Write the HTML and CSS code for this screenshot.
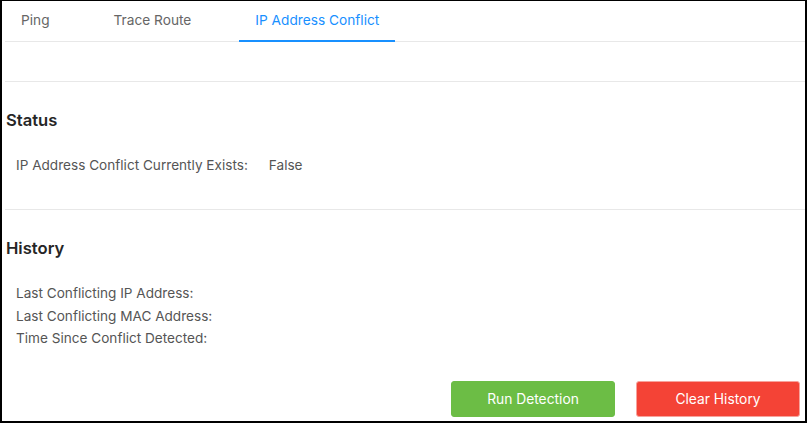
FILE: index.html
```html
<!DOCTYPE html>
<html>
<head>
<meta charset="utf-8">
<link rel="stylesheet" href="styles.css">
</head>
<body>
<div class="frame">
  <div class="tabs">
    <div class="tab">Ping</div>
    <div class="tab">Trace Route</div>
    <div class="tab active">IP Address Conflict</div>
  </div>
  <div class="spacer"></div>
  <section class="section status">
    <h2 class="heading">Status</h2>
    <div class="rows">
      <div class="row"><span class="label">IP Address Conflict Currently Exists:</span><span class="value">False</span></div>
    </div>
  </section>
  <section class="section history">
    <h2 class="heading">History</h2>
    <div class="rows">
      <div class="row"><span class="label">Last Conflicting IP Address:</span></div>
      <div class="row"><span class="label">Last Conflicting MAC Address:</span></div>
      <div class="row"><span class="label">Time Since Conflict Detected:</span></div>
    </div>
  </section>
  <div class="actions">
    <button class="btn btn-run">Run Detection</button>
    <button class="btn btn-clear">Clear History</button>
  </div>
</div>
</body>
</html>
```

FILE: styles.css
```css
* { box-sizing: border-box; }
html, body { margin: 0; padding: 0; background: #fff; }
body {
  font-family: Inter, "Noto Sans", "Liberation Sans", sans-serif;
  width: 807px;
  height: 423px;
}
.frame {
  width: 807px;
  height: 423px;
  border-style: solid;
  border-color: #000;
  border-width: 1px 2px 2px 2px;
  padding-left: 3px;
}
.tabs {
  display: flex;
  gap: 32px;
  height: 41px;
  border-bottom: 1px solid #e8e8e8;
}
.tab {
  height: 41px;
  padding: 0 16px;
  line-height: 39px;
  font-size: 13.7px;
  color: #666;
  border-bottom: 2px solid transparent;
}
.tab.active {
  color: #1890ff;
  border-bottom-color: #1890ff;
}
.spacer {
  height: 40px;
  border-bottom: 1px solid #e8e8e8;
}
.section {
  padding-top: 26px;
}
.status {
  height: 128px;
  border-bottom: 1px solid #e8e8e8;
}
.heading {
  margin: 0 0 0 1px;
  font-size: 16.6px;
  line-height: 24px;
  font-weight: 600;
  color: #262626;
}
.rows {
  margin-top: 22px;
  padding-left: 11px;
}
.row {
  display: flex;
  font-size: 13.6px;
  line-height: 22.5px;
  color: #555;
}
.value {
  margin-left: 21px;
}
.actions {
  display: flex;
  justify-content: flex-end;
  gap: 21px;
  padding-right: 5px;
  margin-top: 31px;
}
.btn {
  width: 164px;
  height: 36px;
  border-radius: 3px;
  border: 1px solid transparent;
  color: #fff;
  font-family: inherit;
  font-size: 13.8px;
  padding: 0;
}
.btn-run {
  background: #6cbd45;
  border-color: #6cbd45;
}
.btn-clear {
  background: #f44336;
  border-color: #f7a39c;
}
```
